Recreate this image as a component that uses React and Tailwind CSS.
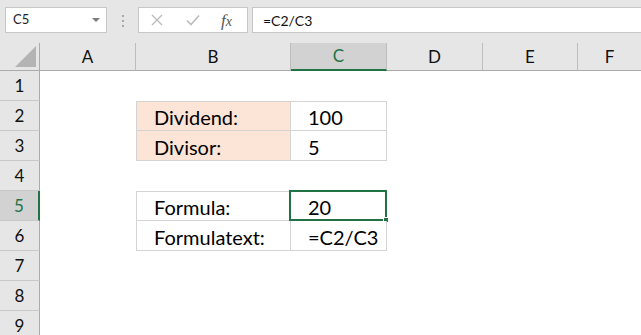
const cols = ["A", "B", "C", "D", "E", "F"];
const rows = [1, 2, 3, 4, 5, 6, 7, 8, 9];

const table = {
  2: { b: "Dividend:", c: "100", fill: true },
  3: { b: "Divisor:", c: "5", fill: true },
  5: { b: "Formula:", c: "20" },
  6: { b: "Formulatext:", c: "=C2/C3" },
};

function FormulaBar() {
  return (
    <div className="flex h-[43px] items-start bg-[#e6e6e6] pt-[7px]">
      <div className="ml-[5px] flex h-[26px] w-[102px] items-center justify-between border border-[#c6c6c6] bg-white pl-[7px] pr-[6px] text-[13px] text-[#222]">
        <span>C5</span>
        <svg width="8" height="4" viewBox="0 0 8 4">
          <path d="M0 0h8L4 4z" fill="#7a7a7a" />
        </svg>
      </div>
      <div className="flex w-[31px] flex-col items-center gap-[3px] pt-[8px]">
        <span className="h-[2px] w-[2px] bg-[#a8a8a8]" />
        <span className="h-[2px] w-[2px] bg-[#a8a8a8]" />
        <span className="h-[2px] w-[2px] bg-[#a8a8a8]" />
      </div>
      <div className="flex h-[26px] w-[110px] items-center border border-[#c6c6c6] bg-white">
        <svg width="12" height="12" viewBox="0 0 12 12" className="ml-[12px]">
          <path d="M1 1l10 10M11 1L1 11" stroke="#bcbcbc" strokeWidth="1.4" />
        </svg>
        <svg width="14" height="12" viewBox="0 0 14 12" className="ml-[23px]">
          <path d="M1 6.5l4 4L13 1.5" stroke="#bcbcbc" strokeWidth="1.6" fill="none" />
        </svg>
        <span className="ml-[21px] font-['Liberation_Serif',serif] text-[17px] italic leading-none text-[#555]">
          f<span className="text-[14px]">x</span>
        </span>
      </div>
      <div className="ml-[4px] flex h-[26px] flex-1 items-center border border-r-0 border-[#c6c6c6] bg-white pl-[10px] text-[14px] text-[#111]">
        =C2/C3
      </div>
    </div>
  );
}

function Cell({ r, col }) {
  const row = table[r];
  if (!row || (col !== "B" && col !== "C")) return <div className="bg-white" />;
  const isB = col === "B";
  const text = isB ? row.b : row.c;
  const fill = row.fill && isB;
  const top = r === 2 || r === 5;
  const selected = r === 5 && col === "C";
  return (
    <div
      className={`relative flex items-center pt-[2px] text-[20px] text-black ${isB ? "border-l pl-[17px]" : "pl-[17px]"} ${top ? "border-t" : ""} border-r border-b border-[#d4d4d4] ${fill ? "bg-[#fce4d6]" : "bg-white"}`}
    >
      {text}
      {selected && (
        <>
          <div className="absolute -left-[2px] -top-[2px] -right-[1px] -bottom-[1px] border-2 border-[#217346]" />
          <div className="absolute -bottom-[3px] -right-[3px] h-[6px] w-[6px] border border-white bg-[#217346]" />
        </>
      )}
    </div>
  );
}

export default function App() {
  return (
    <div className="h-[335px] w-[641px] overflow-hidden bg-white font-['Lato','Liberation_Sans',sans-serif]">
      <FormulaBar />
      <div className="grid grid-cols-[40px_96px_155px_96px_96px_95px_1fr] grid-rows-[28px_repeat(9,30px)]">
        <div className="relative border-r border-b border-[#ababab] bg-[#e6e6e6]">
          <svg width="22" height="22" viewBox="0 0 22 22" className="absolute left-[15px] top-[3px]">
            <path d="M21 0V21H0z" fill="#b4b4b4" />
          </svg>
        </div>
        {cols.map((c) => (
          <div
            key={c}
            className={`flex items-center justify-center border-b text-[17px] ${c === "C" ? "border-b-[#217346] border-b-2 bg-[#d2d2d2] text-[#217346]" : "border-b-[#ababab] bg-[#e6e6e6] text-[#111]"} ${c === "F" ? "" : "border-r border-r-[#bdbdbd]"}`}
          >
            {c}
          </div>
        ))}
        {rows.map((r) => (
          <div key={r} className="contents">
            <div
              className={`flex items-center justify-center border-b border-b-[#c8c8c8] text-[17px] ${r === 5 ? "border-r-2 border-r-[#217346] bg-[#d2d2d2] text-[#217346]" : "border-r border-r-[#ababab] bg-[#e6e6e6] text-[#111]"}`}
            >
              {r}
            </div>
            {cols.map((c) => (
              <Cell key={c} r={r} col={c} />
            ))}
          </div>
        ))}
      </div>
    </div>
  );
}
